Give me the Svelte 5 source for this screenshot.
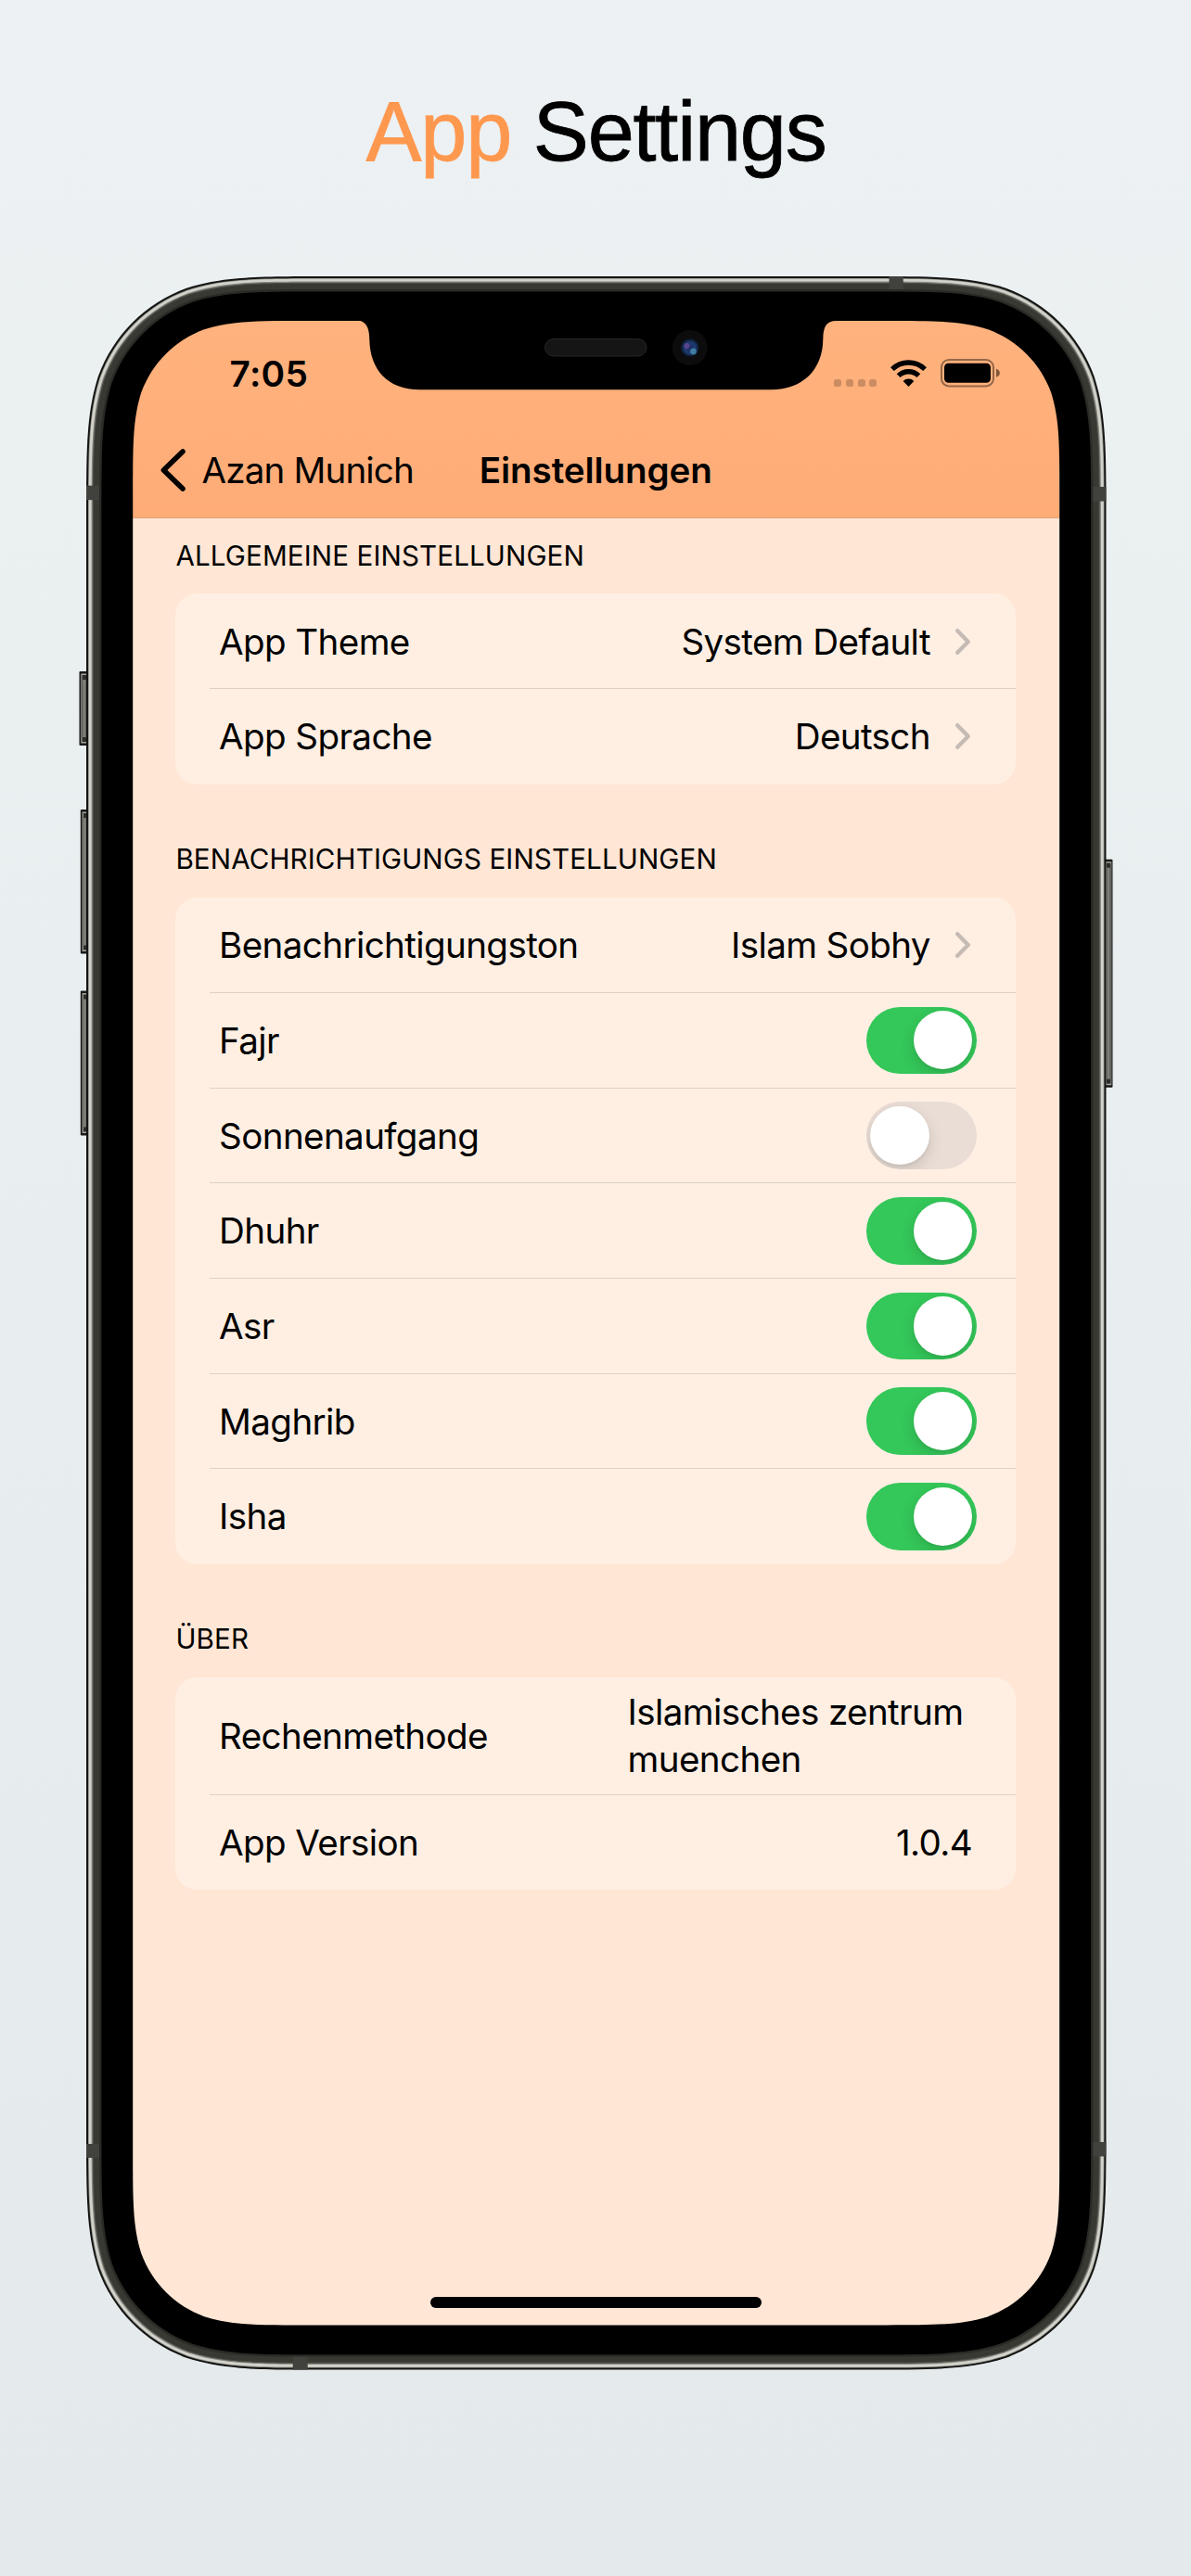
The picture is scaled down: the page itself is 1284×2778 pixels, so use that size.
<script>
  // Continuous ("squircle") rounded rectangle outline.
  function squircle(x, y, w, h, r) {
    const a = 1.52866 * r, b = 1.08849 * r, c = 0.86841 * r;
    const d = 0.63149 * r, e = 0.07491 * r, f = 0.37282 * r, g = 0.16906 * r;
    const R = x + w, B = y + h;
    return [
      `M${x + a} ${y}H${R - a}`,
      `C${R - b} ${y} ${R - c} ${y} ${R - d} ${y + e}`,
      `C${R - f} ${y + g} ${R - g} ${y + f} ${R - e} ${y + d}`,
      `C${R} ${y + c} ${R} ${y + b} ${R} ${y + a}V${B - a}`,
      `C${R} ${B - b} ${R} ${B - c} ${R - e} ${B - d}`,
      `C${R - g} ${B - f} ${R - f} ${B - g} ${R - d} ${B - e}`,
      `C${R - c} ${B} ${R - b} ${B} ${R - a} ${B}H${x + a}`,
      `C${x + b} ${B} ${x + c} ${B} ${x + d} ${B - e}`,
      `C${x + f} ${B - g} ${x + g} ${B - f} ${x + e} ${B - d}`,
      `C${x} ${B - c} ${x} ${B - b} ${x} ${B - a}V${y + a}`,
      `C${x} ${y + b} ${x} ${y + c} ${x + e} ${y + d}`,
      `C${x + g} ${y + f} ${x + f} ${y + g} ${x + d} ${y + e}`,
      `C${x + c} ${y} ${x + b} ${y} ${x + a} ${y}Z`
    ].join('');
  }

  const W = 1099.5, H = 2257.6;
  const ring = (i) => squircle(i, i, W - 2 * i, H - 2 * i, 171 - i);
  const hole = squircle(50.2, 48, 999, 2161.4, 122);

  // Parts of the case, in the coordinates of the frame drawing.
  const keys = [
    { x: -7.5, y: 426, w: 10, h: 80 },
    { x: -6.2, y: 575, w: 9, h: 155.5 },
    { x: -6.2, y: 770.5, w: 9, h: 156 },
    { x: 1097, y: 628.7, w: 9.5, h: 246 }
  ];
  const bands = [
    { x: 0, y: 225.7, w: 14, h: 15.5 },
    { x: 0, y: 2014, w: 14, h: 15 },
    { x: 1085.5, y: 227, w: 14, h: 15.6 },
    { x: 1085.5, y: 2012, w: 14, h: 15.5 },
    { x: 865.5, y: 0, w: 15.3, h: 14 },
    { x: 222.7, y: 2243.6, w: 16, h: 14 }
  ];

  let sections = $state([
    {
      title: 'ALLGEMEINE EINSTELLUNGEN',
      rows: [
        { label: 'App Theme', value: 'System Default', link: true },
        { label: 'App Sprache', value: 'Deutsch', link: true }
      ]
    },
    {
      title: 'BENACHRICHTIGUNGS EINSTELLUNGEN',
      rows: [
        { label: 'Benachrichtigungston', value: 'Islam Sobhy', link: true },
        { label: 'Fajr', on: true },
        { label: 'Sonnenaufgang', on: false },
        { label: 'Dhuhr', on: true },
        { label: 'Asr', on: true },
        { label: 'Maghrib', on: true },
        { label: 'Isha', on: true }
      ]
    },
    {
      title: 'ÜBER',
      rows: [
        { label: 'Rechenmethode', value: 'Islamisches zentrum muenchen', wrap: true },
        { label: 'App Version', value: '1.0.4' }
      ]
    }
  ]);
</script>

<main class="page">
  <h1><span class="accent">App</span> Settings</h1>

  <div class="phone">
    <div class="screen">
      <header>
        <div class="status">
          <span class="time">7:05</span>
          <div class="indicators">
            <div class="cell"><i></i><i></i><i></i><i></i></div>
            <svg class="wifi" viewBox="0 0 39 29" width="39" height="29" aria-hidden="true">
              <g fill="none" stroke="#000" stroke-width="5.4">
                <path d="M1.9 10.2A25 25 0 0 1 37.1 10.2" />
                <path d="M8.6 17.2A15.4 15.4 0 0 1 30.4 17.2" />
              </g>
              <path d="M19.5 29L13.6 22.9A8.5 8.5 0 0 1 25.4 22.9Z" />
            </svg>
            <svg class="battery" viewBox="0 0 64 31" width="64" height="31" aria-hidden="true">
              <rect x="1" y="1" width="56" height="28.4" rx="8" fill="none" stroke="#000" stroke-opacity=".42" stroke-width="2" />
              <rect x="4" y="4.7" width="50" height="21" rx="4.5" />
              <path d="M60 10.8Q63.8 12 63.8 15.3T60 19.8Z" fill-opacity=".5" />
            </svg>
          </div>
        </div>
        <nav>
          <button class="back">
            <svg viewBox="0 0 27 46" width="27" height="46" aria-hidden="true">
              <path d="M24 3L3.400 23L24 43" fill="none" stroke="#000" stroke-width="5.6" stroke-linecap="round" stroke-linejoin="round" />
            </svg>
            Azan Munich
          </button>
          <h2>Einstellungen</h2>
        </nav>
      </header>

      <div class="content">
        {#each sections as section}
          <section>
            <h3>{section.title}</h3>
            <div class="card">
              {#each section.rows as row}
                <div class="row">
                  <span class="label">{row.label}</span>
                  {#if row.value}
                    <span class="value" class:wrap={row.wrap}>{row.value}</span>
                  {/if}
                  {#if row.link}
                    <svg class="chevron" viewBox="0 0 18 30" width="18" height="30" aria-hidden="true">
                      <path d="M3.2 3.2L14.8 15L3.2 26.8" fill="none" stroke="#c6bbb4" stroke-width="4.4" stroke-linecap="round" stroke-linejoin="round" />
                    </svg>
                  {/if}
                  {#if row.on !== undefined}
                    <button
                      class="switch"
                      class:on={row.on}
                      role="switch"
                      aria-checked={row.on}
                      aria-label={row.label}
                      onclick={() => (row.on = !row.on)}
                    ><span class="knob"></span></button>
                  {/if}
                </div>
              {/each}
            </div>
          </section>
        {/each}
      </div>
      <div class="home"></div>
    </div>

    <svg class="frame" viewBox="0 0 1099.5 2257.6" width="1099.5" height="2257.6" aria-hidden="true">
      <defs>
        <radialGradient id="lens">
          <stop offset="0" stop-color="#1b2a5c" />
          <stop offset=".6" stop-color="#1d3c72" />
          <stop offset="1" stop-color="#0a1426" />
        </radialGradient>
        <linearGradient id="key" x1="0" x2="1" y1="0" y2="0">
          <stop offset="0" stop-color="#55574f" />
          <stop offset=".5" stop-color="#8b8c85" />
          <stop offset="1" stop-color="#55574f" />
        </linearGradient>
        <mask id="cut" maskUnits="userSpaceOnUse" x="-10" y="-10" width="1120" height="2280">
          <rect x="-10" y="-10" width="1120" height="2280" fill="#fff" />
          <path d={hole} fill="#000" />
        </mask>
      </defs>
      {#each keys as k}
        <rect x={k.x} y={k.y} width={k.w} height={k.h} rx="1" fill="#191a18" />
        <rect x={k.x + 1.8} y={k.y + 2.5} width={k.w - 3} height={k.h - 5} fill="#a5a69f" />
        <rect x={k.x + 3} y={k.y + 4} width={k.w - 5} height={k.h - 8} fill="#2c2d2a" />
        <rect x={k.x + 3} y={k.y + 9} width={k.w - 5.5} height={k.h - 18} fill="url(#key)" />
      {/each}
      <g mask="url(#cut)">
        <path d={ring(0)} fill="#141513" />
        <path d={ring(2)} fill="#8d8e87" />
        <path d={ring(2.8)} fill="#d2d2cb" />
        <path d={ring(5.6)} fill="#85867f" />
        <path d={ring(6.8)} fill="#4a4b44" />
        <path d={ring(8)} fill="#383932" />
        <path d={ring(14)} fill="#2a2b26" />
        {#each bands as b}
          <rect x={b.x} y={b.y} width={b.w} height={b.h} fill="#41423d" />
        {/each}
        <path d={ring(16.4)} fill="#000" />
      </g>
      <path d="M288 47H290.500C301.500 48 305 54 305.300 68C305.800 100 324.300 122.300 360 122.300H738C773 122.300 794 100 794.300 68C794.500 54 798 48 808.500 48V47Z" />
      <rect x="494.500" y="67.500" width="109.500" height="18.500" rx="9.200" fill="#151515" stroke="#262626" stroke-width="1" />
      <circle cx="650.800" cy="77" r="19" fill="#0c0c0d" />
      <circle cx="650.800" cy="77" r="9.800" fill="url(#lens)" />
      <circle cx="647.500" cy="75" r="3" fill="#6a4796" fill-opacity=".8" />
      <circle cx="654.500" cy="81" r="3.400" fill="#4a8fb0" fill-opacity=".8" />
    </svg>
  </div>
</main>

<style>
  :global(body) {
    margin: 0;
  }
  .page {
    box-sizing: border-box;
    width: 1284px;
    height: 2778px;
    overflow: hidden;
    display: flex;
    flex-direction: column;
    background: linear-gradient(#edf1f4 0%, #ebf0f1 15%, #e9eef0 40%, #e6ebed 75%, #e4eaec 100%);
    color: #000;
    font-family: Inter, "Liberation Sans", sans-serif;
  }
  h1, h2, h3 {
    margin: 0;
    font-weight: 400;
  }
  h1 {
    height: 298px;
    box-sizing: border-box;
    padding: 90px 0 0 1px;
    text-align: center;
    font: 400 90px/104px "Liberation Sans", Arial, sans-serif;
    letter-spacing: -1.2px;
    -webkit-text-stroke: 0.8px currentColor;
  }
  .accent {
    color: #ff984f;
  }
  .phone {
    position: relative;
    box-sizing: border-box;
    width: 1099.5px;
    height: 2257.6px;
    margin-left: 92.6px;
    padding: 48px 50px;
    flex: none;
  }
  .frame {
    position: absolute;
    top: 0;
    left: 0;
    overflow: visible;
    pointer-events: none;
  }
  .screen {
    height: 100%;
    box-sizing: border-box;
    display: flex;
    flex-direction: column;
    overflow: hidden;
    border-radius: 70px;
    background: #ffe6d5;
  }
  header {
    box-sizing: border-box;
    height: 213.4px;
    flex: none;
    background: linear-gradient(#ffb27d, #ffac77);
    border-bottom: 1px solid #d9a582;
  }
  .status {
    height: 110px;
    box-sizing: border-box;
    padding: 3px 64px 0 105px;
    display: flex;
    align-items: center;
    justify-content: space-between;
  }
  .time {
    font-size: 38.8px;
    font-weight: 600;
    letter-spacing: 0.3px;
  }
  .indicators {
    display: flex;
    align-items: center;
  }
  .cell {
    display: flex;
    gap: 4.6px;
    padding-top: 21px;
    margin-right: 15px;
  }
  .cell i {
    width: 8px;
    height: 8px;
    border-radius: 2.5px;
    background: rgba(0, 0, 0, 0.2);
  }
  .wifi {
    margin-right: 15px;
  }
  nav {
    height: 102.4px;
    display: grid;
    grid-template-columns: 1fr auto 1fr;
    align-items: center;
  }
  button {
    margin: 0;
    padding: 0;
    border: 0;
    background: none;
    color: inherit;
    font: inherit;
    letter-spacing: inherit;
  }
  .back {
    display: flex;
    align-items: center;
    gap: 17.5px;
    padding-left: 30.5px;
    white-space: nowrap;
    font-size: 38.6px;
    letter-spacing: -0.87px;
  }
  h2 {
    font-size: 38.6px;
    font-weight: 600;
    letter-spacing: -0.1px;
  }
  .content {
    flex: 1;
    padding: 16.3px 47.3px 0 46.8px;
  }
  section {
    margin-bottom: 57.8px;
  }
  h3 {
    height: 64.5px;
    font-size: 29.6px;
    line-height: 46.4px;
    letter-spacing: 0.12px;
    white-space: nowrap;
  }
  .card {
    border-radius: 23.5px;
    background: #ffefe3;
  }
  .row {
    position: relative;
    box-sizing: border-box;
    min-height: 102.7px;
    padding: 12px 46.7px;
    display: flex;
    align-items: center;
    font-size: 38.6px;
    line-height: 51.4px;
    letter-spacing: -0.62px;
  }
  .row + .row::before {
    content: "";
    position: absolute;
    top: -0.5px;
    left: 37px;
    right: 0;
    height: 1px;
    background: #ddd0c6;
  }
  .label {
    flex: 1;
    white-space: nowrap;
  }
  .label,
  .value:not(.wrap) {
    padding-top: 1.4px;
  }
  .value.wrap {
    width: 371.5px;
  }
  .chevron {
    margin: 0 1px 0 26.2px;
  }
  .switch {
    width: 119.4px;
    height: 72.6px;
    margin: -12px -5px -12px 0;
    padding: 4.7px;
    box-sizing: border-box;
    flex: none;
    display: flex;
    border-radius: 37px;
    overflow: hidden;
    background: #e9ddd5;
  }
  .switch.on {
    justify-content: flex-end;
    background: #34c759;
  }
  .knob {
    width: 63.2px;
    height: 63.2px;
    border-radius: 50%;
    background: #fff;
    box-shadow: 0 6px 16px rgba(0, 0, 0, 0.13), 0 2px 3px rgba(0, 0, 0, 0.06);
  }
  .home {
    width: 357px;
    height: 12px;
    margin: 0 auto 18.5px;
    border-radius: 6px;
    background: #000;
  }
</style>
